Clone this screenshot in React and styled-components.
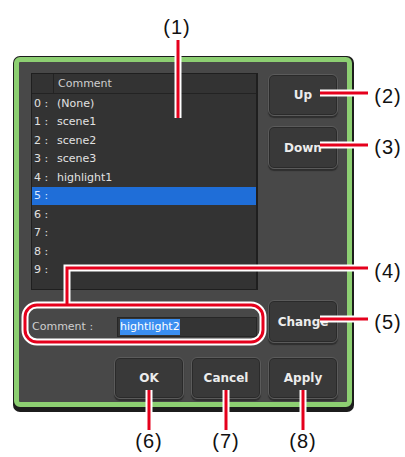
import React from 'react';
import styled, { createGlobalStyle } from 'styled-components';

const GlobalStyle = createGlobalStyle`
  body {
    margin: 0;
    background: #ffffff;
  }
  * {
    box-sizing: border-box;
  }
`;

const rows = ['(None)', 'scene1', 'scene2', 'scene3', 'highlight1', '', '', '', '', ''];

const Page = styled.div`
  position: relative;
  width: 405px;
  height: 457px;
  overflow: hidden;
  padding: 56px 0 0 13px;
  font-family: "DejaVu Sans", Verdana, sans-serif;
`;

const Shadow = styled.div`
  width: 341px;
  height: 356px;
  padding: 1px 2px 5px 1px;
  background: #1c1c1c;
  border-radius: 7px;
`;

const Frame = styled.div`
  height: 100%;
  border: 5px solid #8dcf72;
  border-radius: 6px;
  background: #484848;
  padding: 11px 9px 3px 12px;
  display: flex;
  flex-direction: column;
`;

const TopRow = styled.div`
  display: flex;
  gap: 10px;
  height: 217px;
`;

const Table = styled.div`
  width: 227px;
  background: #333333;
  border: 1px solid #1f1f1f;
  border-right-width: 2px;
  display: flex;
  flex-direction: column;
`;

const Header = styled.div`
  display: flex;
  flex: none;
  height: 20px;
  border-bottom: 1px solid #232323;
  color: #cfcfcf;
  font-size: 11px;
  line-height: 19px;
`;

const HeadCorner = styled.div`
  width: 22px;
  border-right: 1px solid #232323;
`;

const HeadTitle = styled.div`
  padding-left: 4px;
`;

const Row = styled.div`
  display: flex;
  flex: none;
  height: 18.5px;
  align-items: center;
  font-size: 11px;
  color: ${p => (p.$selected ? '#dde9ff' : '#e2e2e2')};
  background: ${p => (p.$selected ? '#1f6ed8' : 'transparent')};
`;

const Index = styled.span`
  width: 25px;
  padding-left: 2px;
  white-space: pre;
`;

const SideColumn = styled.div`
  display: flex;
  flex-direction: column;
  gap: 10px;
  padding-top: 1px;
`;

const Button = styled.div`
  width: 70px;
  height: ${p => p.$h || 42}px;
  display: flex;
  align-items: center;
  justify-content: center;
  border-radius: 6px;
  background: #393939;
  border: 1px solid #5b5b5b;
  box-shadow: inset 0 0 0 1px #2a2a2a, 0 2px 1px #2e2e2e;
  color: #ececec;
  font-size: 12px;
  font-weight: bold;
`;

const CommentRow = styled.div`
  display: flex;
  gap: 10px;
  margin-top: 10px;
  height: 43px;
`;

const CommentArea = styled.div`
  width: 227px;
  display: flex;
  align-items: flex-end;
  padding-bottom: 6px;
`;

const CommentLabel = styled.div`
  width: 86px;
  padding-left: 1px;
  height: 20px;
  line-height: 20px;
  font-size: 11px;
  color: #cfcfcf;
`;

const Input = styled.div`
  width: 140px;
  height: 20px;
  background: #343434;
  border: 1px solid #262626;
  display: flex;
  align-items: center;
  padding-left: 2px;
  font-size: 11px;
`;

const Selected = styled.span`
  background: #3a8ef0;
  color: #ffffff;
  line-height: 16px;
`;

const BottomRow = styled.div`
  display: flex;
  justify-content: flex-end;
  gap: 7px;
  margin-top: 14px;
`;

const Overlay = styled.svg`
  position: absolute;
  left: 0;
  top: 0;
  pointer-events: none;
`;

const Callout = styled.span`
  position: absolute;
  transform: translate(-50%, -50%);
  font-family: "Liberation Sans", Arial, sans-serif;
  font-size: 20px;
  letter-spacing: 1px;
  color: #111111;
  white-space: nowrap;
`;

const lines = [
  'M178 40 V118',
  'M320 93 H368',
  'M320 145 H368',
  'M368 268 H67 V305',
  'M320 319 H368',
  'M149 390 V430',
  'M226 390 V430',
  'M303 390 V430',
];

const callouts = [
  ['(1)', 177, 27],
  ['(2)', 388, 96],
  ['(3)', 388, 147],
  ['(4)', 388, 271],
  ['(5)', 388, 322],
  ['(6)', 149, 441],
  ['(7)', 226, 441],
  ['(8)', 303, 441],
];

function Annotations() {
  return (
    <>
      <Overlay width="405" height="457" viewBox="0 0 405 457">
        <g fill="none" stroke="#ffffff" strokeWidth="7">
          {lines.map((d, i) => <path key={i} d={d} />)}
          <rect x="25" y="305" width="238" height="37" rx="12" />
        </g>
        <g fill="none" stroke="#e5001c" strokeWidth="3">
          {lines.map((d, i) => <path key={i} d={d} />)}
          <rect x="25" y="305" width="238" height="37" rx="12" />
        </g>
      </Overlay>
      {callouts.map(([t, x, y]) => (
        <Callout key={t} style={{ left: x, top: y }}>{t}</Callout>
      ))}
    </>
  );
}

export default function App() {
  return (
    <Page>
      <GlobalStyle />
      <Shadow>
        <Frame>
          <TopRow>
            <Table>
              <Header>
                <HeadCorner />
                <HeadTitle>Comment</HeadTitle>
              </Header>
              {rows.map((name, i) => (
                <Row key={i} $selected={i === 5}>
                  <Index>{i} :</Index>
                  <span>{name}</span>
                </Row>
              ))}
            </Table>
            <SideColumn>
              <Button>Up</Button>
              <Button $h={43}>Down</Button>
            </SideColumn>
          </TopRow>
          <CommentRow>
            <CommentArea>
              <CommentLabel>Comment :</CommentLabel>
              <Input>
                <Selected>hightlight2</Selected>
              </Input>
            </CommentArea>
            <Button $h={43}>Change</Button>
          </CommentRow>
          <BottomRow>
            <Button>OK</Button>
            <Button>Cancel</Button>
            <Button>Apply</Button>
          </BottomRow>
        </Frame>
      </Shadow>
      <Annotations />
    </Page>
  );
}
